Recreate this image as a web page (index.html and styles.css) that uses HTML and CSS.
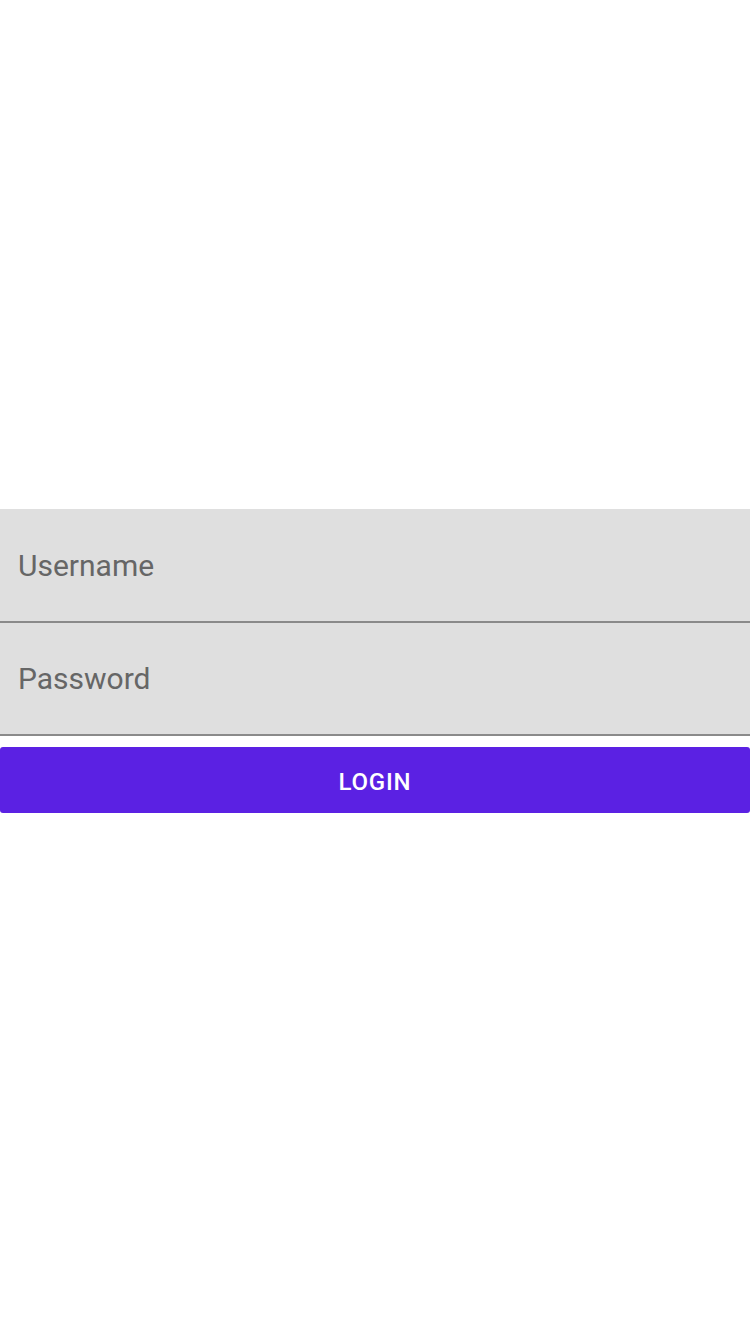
FILE: index.html
```html
<!DOCTYPE html>
<html lang="en">
<head>
    <meta charset="UTF-8">
    <meta name="viewport" content="width=device-width, initial-scale=1.0">
    <title>Login</title>
    <link rel="stylesheet" href="styles.css">
</head>
<body>
    <form class="login-form" id="login-form">
        <input class="field field-first" type="text" name="username" placeholder="Username">
        <input class="field field-second" type="password" name="password" placeholder="Password">
        <button type="submit" class="login-button">LOGIN</button>
    </form>
</body>
</html>
```

FILE: styles.css
```css
body {
    font-family: Roboto, "Noto Sans", sans-serif;
    background-color: #fff;
    margin: 0;
    padding: 0;
}

.login-form {
    display: flex;
    flex-direction: column;
    padding-top: 509px;
}

.field {
    box-sizing: border-box;
    width: 100%;
    margin: 0;
    padding: 0 18px;
    border: none;
    border-bottom: 2px solid #8a8a8a;
    border-radius: 0;
    background-color: #dfdfdf;
    font-family: Roboto, sans-serif;
    font-size: 30px;
    color: #5f5f5f;
    outline: none;
}

.field::placeholder {
    color: #666;
}

.field-first {
    height: 114px;
}

.field-second {
    height: 113px;
}

.login-button {
    margin-top: 11px;
    height: 66px;
    padding: 4px 0 0;
    border: none;
    border-radius: 3px;
    background-color: #5b21e3;
    color: #fff;
    font-family: Roboto, sans-serif;
    font-weight: 500;
    font-size: 24px;
    letter-spacing: 0.8px;
    cursor: pointer;
}
```
